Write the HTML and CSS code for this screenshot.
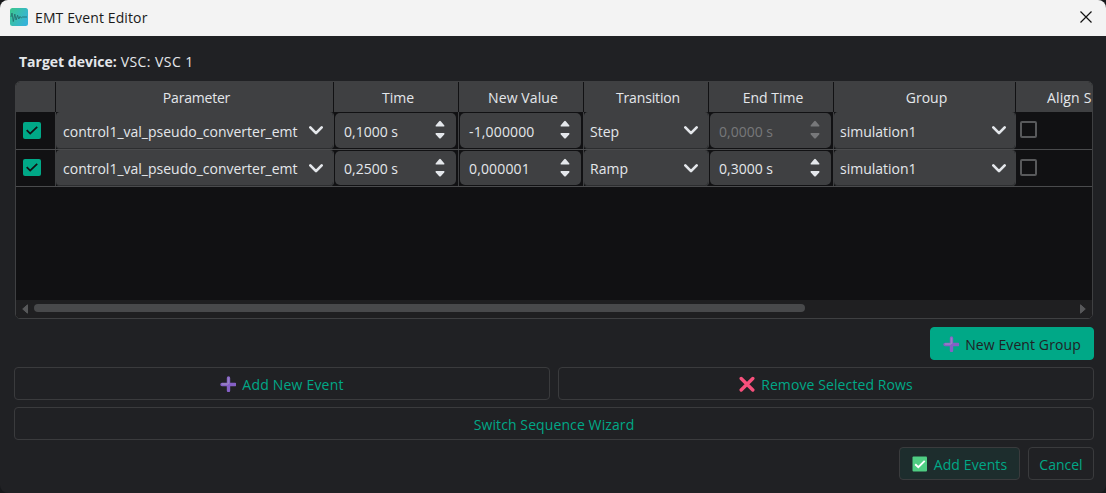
FILE: index.html
```html
<!DOCTYPE html>
<html lang="en">
<head>
<meta charset="utf-8">
<title>EMT Event Editor</title>
<link rel="stylesheet" href="styles.css">
</head>
<body>
<svg class="defs" width="0" height="0">
  <defs>
    <linearGradient id="appGrad" x1="0" y1="0" x2="1" y2="0.6"><stop offset="0" stop-color="#3cc78c"/><stop offset="1" stop-color="#35b3d8"/></linearGradient>
    <symbol id="chev" viewBox="0 0 16 12"><path d="M2.3 2.4 8 8.1 13.7 2.4" fill="none" stroke="#e4e7eb" stroke-width="2.7" stroke-linecap="round" stroke-linejoin="round"/></symbol>
    <symbol id="spin" viewBox="0 0 10 20"><path d="M.6 5.4 4.2 1.2Q5 .5 5.8 1.2L9.4 5.4Q9.6 6.4 9 6.4H1Q.4 6.4 .6 5.4ZM.6 14.2 4.2 18.2Q5 18.9 5.8 18.2L9.4 14.2Q9.6 13 9 13H1Q.4 13 .6 14.2Z" fill="currentColor"/></symbol>
    <symbol id="plus" viewBox="0 0 16 16"><path d="M8.5 2V14.5M2 8.5H15" fill="none" stroke="#8560c6" stroke-width="3.4" stroke-linecap="round"/><path d="M8.5 1.5V8M2 8H8" fill="none" stroke="#9682c2" stroke-width="1.5"/></symbol>
    <symbol id="check" viewBox="0 0 18 17"><rect width="18" height="17" rx="2" fill="#00a887"/><path d="M3.7 8.2 7.2 11.6 14.2 4.9" fill="none" stroke="#111214" stroke-width="1.8"/></symbol>
  </defs>
</svg>
<div class="window">
  <header class="titlebar">
    <svg class="app-icon" viewBox="0 0 18 18"><rect width="18" height="18" rx="2.5" fill="url(#appGrad)"/><path d="M1 9 2 5 3.3 13.5 4.8 6 6.1 12 7.6 7.2 8.8 11 10 8.4 11.3 10 12.5 9H17" fill="none" stroke="#26706f" stroke-width=".9"/></svg>
    <span class="title">EMT Event Editor</span>
    <svg class="close" viewBox="0 0 12 12"><path d="M.5.5 11.5 11.5M11.5.5.5 11.5" stroke="#111" stroke-width="1.2"/></svg>
  </header>
  <main class="content">
    <p class="target"><b>Target device:</b><span class="vsc">VSC: VSC 1</span></p>
    <section class="frame">
      <div class="row head">
        <div></div><div><span class="t-param">Parameter</span></div><div><span>Time</span></div><div><span class="t-new">New Value</span></div><div><span class="t-trans">Transition</span></div><div><span>End Time</span></div><div><span>Group</span></div><div><span>Align S</span></div>
      </div>
      <div class="row body">
        <div class="tick"><svg><use href="#check"/></svg></div>
        <div class="combo first"><span>control1_val_pseudo_converter_emt</span><svg><use href="#chev"/></svg></div>
        <div class="spin"><div class="box"><span>0,1000 s</span><svg><use href="#spin"/></svg></div></div>
        <div class="spin"><div class="box"><span class="t-num">-1,000000</span><svg><use href="#spin"/></svg></div></div>
        <div class="combo mid"><span>Step</span><svg><use href="#chev"/></svg></div>
        <div class="spin"><div class="box off"><span>0,0000 s</span><svg><use href="#spin"/></svg></div></div>
        <div class="combo"><span>simulation1</span><svg><use href="#chev"/></svg></div>
        <div class="empty"><i></i></div>
      </div>
      <div class="row body second">
        <div class="tick"><svg><use href="#check"/></svg></div>
        <div class="combo first"><span>control1_val_pseudo_converter_emt</span><svg><use href="#chev"/></svg></div>
        <div class="spin"><div class="box"><span>0,2500 s</span><svg><use href="#spin"/></svg></div></div>
        <div class="spin"><div class="box"><span class="t-num">0,000001</span><svg><use href="#spin"/></svg></div></div>
        <div class="combo mid"><span>Ramp</span><svg><use href="#chev"/></svg></div>
        <div class="spin"><div class="box"><span>0,3000 s</span><svg><use href="#spin"/></svg></div></div>
        <div class="combo"><span>simulation1</span><svg><use href="#chev"/></svg></div>
        <div class="empty"><i></i></div>
      </div>
      <div class="scrollbar">
        <svg viewBox="0 0 6 10"><path d="M5.5.8V9.2L.7 5Z" fill="#57585a" stroke="#57585a" stroke-linejoin="round"/></svg>
        <div class="thumb"></div>
        <svg class="right" viewBox="0 0 6 10"><path d="M.5.8V9.2L5.3 5Z" fill="#57585a" stroke="#57585a" stroke-linejoin="round"/></svg>
      </div>
    </section>
    <div class="actions end"><button class="primary"><svg><use href="#plus"/></svg><span class="t-group">New Event Group</span></button></div>
    <div class="actions split">
      <button><svg><use href="#plus"/></svg><span class="t-add">Add New Event</span></button>
      <button><svg viewBox="0 0 16 16"><path d="M2.2 2.5 13.8 14M13.8 2.5 2.2 14" stroke="#f7507c" stroke-width="3.4" stroke-linecap="round"/></svg><span class="t-rem">Remove Selected Rows</span></button>
    </div>
    <div class="actions wide"><button><span class="t-wiz">Switch Sequence Wizard</span></button></div>
    <div class="actions end">
      <button class="accept"><svg viewBox="0 0 16 16"><rect x=".5" y=".5" width="14.5" height="15" rx="1" fill="#4fce83"/><path d="M3.2 8.2 6.3 11.2 12.7 4.8" fill="none" stroke="#fff" stroke-width="1.9"/></svg><span class="t-events">Add Events</span></button>
      <button class="cancel"><span class="t-cancel">Cancel</span></button>
    </div>
  </main>
</div>
</body>
</html>
```
FILE: styles.css
```css
* { box-sizing: border-box; }
body { margin: 0; background: #17191b; font: 14px/20px "Open Sans", "Noto Sans", sans-serif; color: #e4e7eb; }
.defs { position: absolute; }
svg { display: block; flex: none; }
span { white-space: nowrap; }
.window { width: 1106px; height: 493px; background: #202124; border-radius: 8px; overflow: hidden; }
.titlebar { height: 36px; background: #f3f3f3; color: #1a1a1a; display: flex; align-items: center; padding: 0 14px 2px 10px; }
.app-icon { width: 18px; height: 18px; margin-right: 7px; }
.title { letter-spacing: .12px; padding-top: 1px; }
.close { width: 12px; height: 12px; margin-left: auto; }
.content { padding: 16px 12px 0 14px; }
.target { margin: 0; height: 29px; padding-left: 5px; display: flex; gap: 4px; }
.vsc { letter-spacing: .45px; }
.frame { width: 1078px; height: 238px; margin-left: 1px; border: 1px solid #3f4042; border-radius: 5px; background: #111113; overflow: hidden; display: flex; flex-direction: column; }
.row { display: grid; grid-template-columns: 40px 278px 125px 125px 125px 125px 182px 76px; }
.row > div { border-right: 1px solid #3f4042; min-width: 0; }
.row > div:last-child { border-right: 0; }
.head { height: 30px; background: #3f4042; }
.row.head > div { display: flex; align-items: center; justify-content: center; border-color: #111113; padding: 2px 0 0 4px; }
.row.head > div:last-child { justify-content: flex-start; padding-left: 31px; letter-spacing: .15px; }
.t-param { letter-spacing: -.2px; }
.t-new { letter-spacing: .1px; }
.t-trans { letter-spacing: -.15px; }
.body { height: 38px; border-bottom: 1px solid #4a4b4d; }
.body.second { height: 37px; }
.tick { padding: 10px 0 0 7px; }
.body.second .tick { padding-top: 9px; }
.tick svg { width: 18px; height: 17px; }
.combo { display: flex; align-items: center; justify-content: space-between; background: #3f4042; background-clip: padding-box; border-radius: 4px; padding: 2px 8px 0 6px; box-shadow: inset 0 -1px #2c2d2f; }
.combo.first { padding: 2px 9px 0 7px; }
.combo.mid { padding-right: 9px; }
.combo svg { width: 16px; height: 12px; margin-top: -1px; }
.spin { padding: 1px 2px 1px 1px; }
.box { height: 100%; background: #3f4042; border-radius: 5px; display: flex; align-items: center; justify-content: space-between; padding: 2px 11px 0 9px; }
.box svg { width: 10px; height: 20px; margin-top: -3px; }
.t-num { letter-spacing: .15px; }
.off { color: #77787a; }
.empty { padding: 9px 0 0 4px; }
.empty i { display: block; width: 17px; height: 17px; border: 2px solid #58595b; border-radius: 2px; }
.scrollbar { height: 18px; margin-top: auto; background: #1f1f21; display: flex; align-items: center; padding: 0 6px 2px; }
.scrollbar svg { width: 6px; height: 10px; margin-top: 1px; }
.thumb { width: 771px; height: 8px; border-radius: 4px; background: #48494b; margin-left: 6px; }
.scrollbar .right { margin-left: auto; }
.actions { display: flex; gap: 8px; height: 33px; margin-bottom: 7px; width: 1080px; }
.frame + .actions { margin-top: 8px; }
.end { justify-content: flex-end; }
button { font: inherit; color: #00a887; height: 33px; border: 1px solid #3a3b3d; border-radius: 4px; background: transparent; padding: 2px 0 0; display: flex; align-items: center; justify-content: center; gap: 6px; }
button svg { width: 16px; height: 16px; margin-top: -1px; }
.split button, .wide button { flex: 1; }
.t-add { letter-spacing: .2px; }
.t-rem, .t-wiz, .t-group { letter-spacing: .1px; }
.t-events { letter-spacing: .1px; }
.primary { width: 164px; background: #00a887; border-color: #00a887; color: #202124; }
.accept { width: 121px; background: #1d2d2d; }
.cancel { width: 66px; }
```
